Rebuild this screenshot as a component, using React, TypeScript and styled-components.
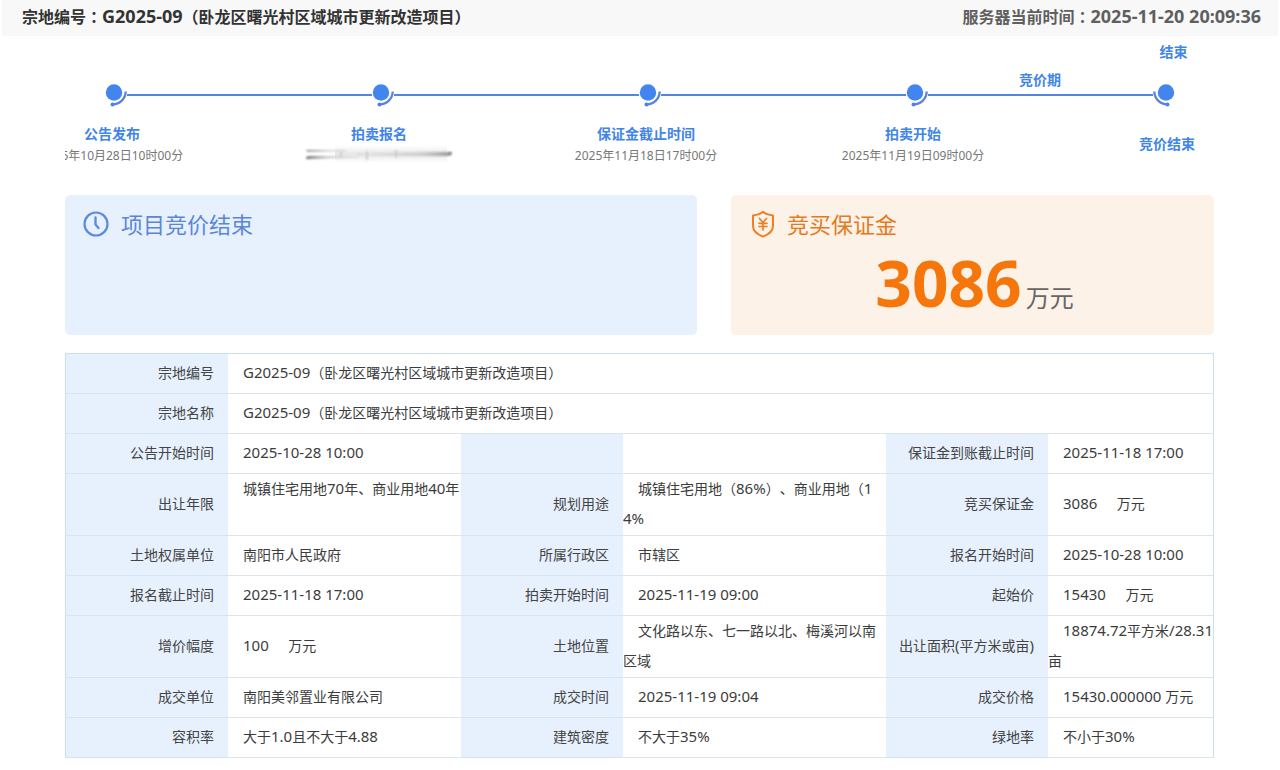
import React from "react";
import styled, { createGlobalStyle } from "styled-components";

const blue = "#4285e8";
const orange = "#f5760a";

const GlobalStyle = createGlobalStyle`
  * { box-sizing: border-box; }
  body {
    margin: 0;
    background: #fff;
    color: #3c3c3c;
    font-family: "Noto Sans", "Noto Sans CJK SC", sans-serif;
    font-size: 14px;
    text-spacing-trim: space-all;
  }
  h1, h2, p { margin: 0; font-weight: 400; }
`;

const LatinRun = styled.span<{ $size: number }>`
  font-size: ${(p) => p.$size}px;
  line-height: 1;
`;

const Punctuation = styled.span`
  font-family: "Noto Sans CJK TC", sans-serif;
  line-height: 1;
`;

/* Sets Latin letters and digits at their own size beside the Chinese text. */
function Mixed({ text, size = 15 }: { text: string; size?: number }) {
  return (
    <>
      {text.split(/([\x20-\x7e]+|：)/).map((part, i) => {
        if (/^[\x20-\x7e]+$/.test(part)) {
          return (
            <LatinRun key={i} $size={size}>
              {part}
            </LatinRun>
          );
        }
        if (part === "：") return <Punctuation key={i}>{part}</Punctuation>;
        return part;
      })}
    </>
  );
}

const TopBar = styled.header`
  display: flex;
  justify-content: space-between;
  align-items: flex-start;
  height: 36px;
  margin: 0 2px;
  padding: 0 17px 0 20px;
  background: #f8f8f8;
`;

const PlotTitle = styled.h1`
  font-size: 16px;
  line-height: 34px;
  font-weight: 700;
  color: #333;
`;

const ServerTime = styled.p`
  font-size: 16px;
  line-height: 34px;
  font-weight: 700;
  color: #5f5f5f;
`;

const Content = styled.main`
  margin: 0 66px 0 65px;
`;

const Timeline = styled.ol`
  display: flex;
  margin: 0;
  padding: 0;
  list-style: none;
  overflow: hidden;
`;

const Step = styled.li<{ $last?: boolean }>`
  flex: ${(p) => (p.$last ? "0 0 81px" : "1 1 0")};
  min-width: 0;
`;

const Caption = styled.div<{ $top?: boolean }>`
  display: flex;
  justify-content: center;
  align-items: ${(p) => (p.$top ? "flex-start" : "flex-end")};
  height: 52px;
  padding: ${(p) => (p.$top ? "8px 0 0" : "0 0 0 81px")};
  font-weight: 700;
  line-height: 16px;
  color: ${blue};
`;

const Track = styled.div`
  display: flex;
  align-items: center;
  height: 14px;
`;

const Line = styled.span<{ $width?: number; $hidden?: boolean }>`
  flex: ${(p) => (p.$width ? `0 0 ${p.$width}px` : "1")};
  height: 2px;
  background: ${(p) => (p.$hidden ? "transparent" : "#5386e2")};
`;

const StepText = styled.div<{ $last?: boolean }>`
  display: flex;
  flex-direction: column;
  align-items: center;
  width: ${(p) => (p.$last ? 68 : 94)}px;
  margin-top: ${(p) => (p.$last ? 32 : 22)}px;
  white-space: nowrap;
`;

const StepName = styled.strong`
  line-height: 20px;
  color: ${blue};
`;

const StepDate = styled.span`
  font-size: 12px;
  line-height: 24px;
  color: #777;
`;

const Cards = styled.div`
  display: grid;
  grid-template-columns: 632fr 483fr;
  gap: 34px;
  margin-top: 27px;
`;

const Card = styled.section<{ $bg: string }>`
  height: 140px;
  padding: 14px 18px 0;
  border-radius: 5px;
  background: ${(p) => p.$bg};
`;

const CardTitle = styled.h2<{ $color: string }>`
  display: flex;
  align-items: center;
  gap: 12px;
  font-size: 22px;
  line-height: 30px;
  color: ${(p) => p.$color};
`;

const Amount = styled.p`
  display: flex;
  justify-content: center;
  align-items: baseline;
  gap: 4px;
  padding-left: 4px;
  font-size: 24px;
  line-height: 88px;
  color: #666;
`;

const AmountNumber = styled.strong`
  font-size: 64px;
  color: ${orange};
`;

const DataTable = styled.table`
  width: 100%;
  margin-top: 18px;
  table-layout: fixed;
  border-collapse: separate;
  border-spacing: 0;
  border: solid #c9e0f3;
  border-width: 1px 1px 0;
  line-height: 30px;
`;

const Label = styled.th`
  height: 40px;
  padding: 0 14px 1px 0;
  border-bottom: 1px solid #d6e4f0;
  background: #e7f1fe;
  font-weight: 400;
  text-align: right;
  white-space: nowrap;
  color: #444;
`;

const Value = styled.td<{ $top?: boolean }>`
  height: 40px;
  padding: 0 0 1px;
  border-bottom: 1px solid #dde4ea;
  text-indent: 15px;
  white-space: pre;
  vertical-align: ${(p) => (p.$top ? "top" : "middle")};
`;

function Dot({ flip }: { flip?: boolean }) {
  return (
    <svg width="22" height="24" viewBox="0 0 22 24" aria-hidden="true">
      <g transform={flip ? "translate(22 0) scale(-1 1)" : undefined}>
        <circle cx="9" cy="9.5" r="8.200" fill="#4285ee" />
        <path d="M20.700 8.500C20.500 16 15 21 7.500 21.500" fill="none" stroke="#5c82df" strokeWidth="2.300" />
        <circle cx="7.500" cy="21.500" r="2" fill="#5080e4" />
      </g>
    </svg>
  );
}

function SmearedDate() {
  return (
    <svg width="148" height="20" viewBox="0 0 148 20" role="img" aria-label="日期">
      <defs>
        <linearGradient id="smear" x1="0" x2="1" y1="0" y2="0">
          <stop offset="0" stopColor="#777" />
          <stop offset=".15" stopColor="#ccc" />
          <stop offset=".4" stopColor="#e4e4e4" />
          <stop offset=".8" stopColor="#ccc" />
          <stop offset="1" stopColor="#999" />
        </linearGradient>
        <linearGradient id="haze" x1="0" x2="0" y1="0" y2="1">
          <stop offset="0" stopColor="#eee" stopOpacity="0" />
          <stop offset=".5" stopColor="#e6e6e6" />
          <stop offset="1" stopColor="#eee" stopOpacity="0" />
        </linearGradient>
        <filter id="soft" x="-5%" y="-20%" width="110%" height="140%">
          <feGaussianBlur stdDeviation="0.8" />
        </filter>
      </defs>
      <rect x="30" y="1" width="112" height="18" fill="url(#haze)" />
      <g filter="url(#soft)">
        <path d="M1 6h40v1.500H2zM1 13l3-1h50v1.500L3 15zM52 9l94-1 1 2-2 2-93 0z" fill="url(#smear)" />
        <path d="M1 14h4M143 9h4" stroke="#777" strokeWidth="2" />
        <path d="M62 7v9M36 8v6M91 6v8" stroke="#ccc" strokeWidth="2" />
      </g>
    </svg>
  );
}

function ClockIcon() {
  return (
    <svg width="26" height="26" viewBox="0 0 26 26" fill="none" stroke="#5b8ae0" aria-hidden="true">
      <circle cx="13" cy="13" r="11.5" strokeWidth="2.2" />
      <path d="M12.500 6.500v7L15.500 17" strokeWidth="2.4" strokeLinecap="round" strokeLinejoin="round" />
    </svg>
  );
}

function ShieldIcon() {
  return (
    <svg width="26" height="28" viewBox="0 0 26 28" fill="none" stroke="#ee7f22" strokeLinecap="round" strokeLinejoin="round" aria-hidden="true">
      <path d="M14 1.800C11.500 4 8 5 4 5.400V16c0 5 4.500 8.500 10 10.600C19.500 24.500 24 21 24 16V5.400C20 5 16.500 4 14 1.800Z" strokeWidth="2" />
      <path d="M10.500 8.500L14 12.500L17.500 8.500M14 12.500V20M10 13.300h8M10 16.500h8" strokeWidth="1.700" />
    </svg>
  );
}

const steps = [
  { name: "公告发布", date: "2025年10月28日10时00分" },
  { name: "拍卖报名" },
  { name: "保证金截止时间", date: "2025年11月18日17时00分" },
  { name: "拍卖开始", date: "2025年11月19日09时00分", caption: "竞价期" },
  { name: "竞价结束", caption: "结束", last: true },
];

const plot = "G2025-09（卧龙区曙光村区域城市更新改造项目）";

type Cell = { label: string; value: string; top?: boolean };

const rows: Cell[][] = [
  [{ label: "宗地编号", value: plot }],
  [{ label: "宗地名称", value: plot }],
  [
    { label: "公告开始时间", value: "2025-10-28 10:00" },
    { label: "", value: "" },
    { label: "保证金到账截止时间", value: "2025-11-18 17:00" },
  ],
  [
    { label: "出让年限", value: "城镇住宅用地70年、商业用地40年", top: true },
    { label: "规划用途", value: "城镇住宅用地（86%）、商业用地（1\n4%" },
    { label: "竞买保证金", value: "3086     万元" },
  ],
  [
    { label: "土地权属单位", value: "南阳市人民政府" },
    { label: "所属行政区", value: "市辖区" },
    { label: "报名开始时间", value: "2025-10-28 10:00" },
  ],
  [
    { label: "报名截止时间", value: "2025-11-18 17:00" },
    { label: "拍卖开始时间", value: "2025-11-19 09:00" },
    { label: "起始价", value: "15430     万元" },
  ],
  [
    { label: "增价幅度", value: "100     万元" },
    { label: "土地位置", value: "文化路以东、七一路以北、梅溪河以南\n区域" },
    { label: "出让面积(平方米或亩)", value: "18874.72平方米/28.31\n亩" },
  ],
  [
    { label: "成交单位", value: "南阳美邻置业有限公司" },
    { label: "成交时间", value: "2025-11-19 09:04" },
    { label: "成交价格", value: "15430.000000 万元" },
  ],
  [
    { label: "容积率", value: "大于1.0且不大于4.88" },
    { label: "建筑密度", value: "不大于35%" },
    { label: "绿地率", value: "不小于30%" },
  ],
];

const Column = styled.col<{ $width?: string }>`
  width: ${(p) => p.$width ?? "162px"};
`;

export default function App() {
  return (
    <>
      <GlobalStyle />
      <TopBar>
        <PlotTitle>
          <Mixed text={"宗地编号：" + plot} size={18} />
        </PlotTitle>
        <ServerTime>
          <Mixed text="服务器当前时间：2025-11-20 20:09:36" size={18} />
        </ServerTime>
      </TopBar>
      <Content>
        <Timeline>
          {steps.map((s, i) => (
            <Step key={s.name} $last={s.last}>
              <Caption $top={s.last}>{s.caption}</Caption>
              <Track>
                <Line $width={s.last ? 20 : 40} $hidden={i === 0} />
                <Dot flip={s.last} />
                {!s.last && <Line />}
              </Track>
              <StepText $last={s.last}>
                <StepName>{s.name}</StepName>
                {s.date && <StepDate>{s.date}</StepDate>}
                {!s.date && !s.last && <SmearedDate />}
              </StepText>
            </Step>
          ))}
        </Timeline>
        <Cards>
          <Card $bg="#e7f1fe">
            <CardTitle $color="#5b86d8">
              <ClockIcon />
              项目竞价结束
            </CardTitle>
          </Card>
          <Card $bg="#fdf2e8">
            <CardTitle $color="#e57a1c">
              <ShieldIcon />
              竞买保证金
            </CardTitle>
            <Amount>
              <AmountNumber>3086</AmountNumber>
              万元
            </Amount>
          </Card>
        </Cards>
        <DataTable>
          <colgroup>
            <Column />
            <Column $width="233px" />
            <Column />
            <Column $width="auto" />
            <Column />
            <Column $width="165px" />
          </colgroup>
          <tbody>
            {rows.map((row, i) => (
              <tr key={i}>
                {row.map((cell, j) => (
                  <React.Fragment key={j}>
                    <Label scope="row">
                      <Mixed text={cell.label} />
                    </Label>
                    <Value colSpan={row.length === 1 ? 5 : 1} $top={cell.top}>
                      <Mixed text={cell.value} />
                    </Value>
                  </React.Fragment>
                ))}
              </tr>
            ))}
          </tbody>
        </DataTable>
      </Content>
    </>
  );
}
